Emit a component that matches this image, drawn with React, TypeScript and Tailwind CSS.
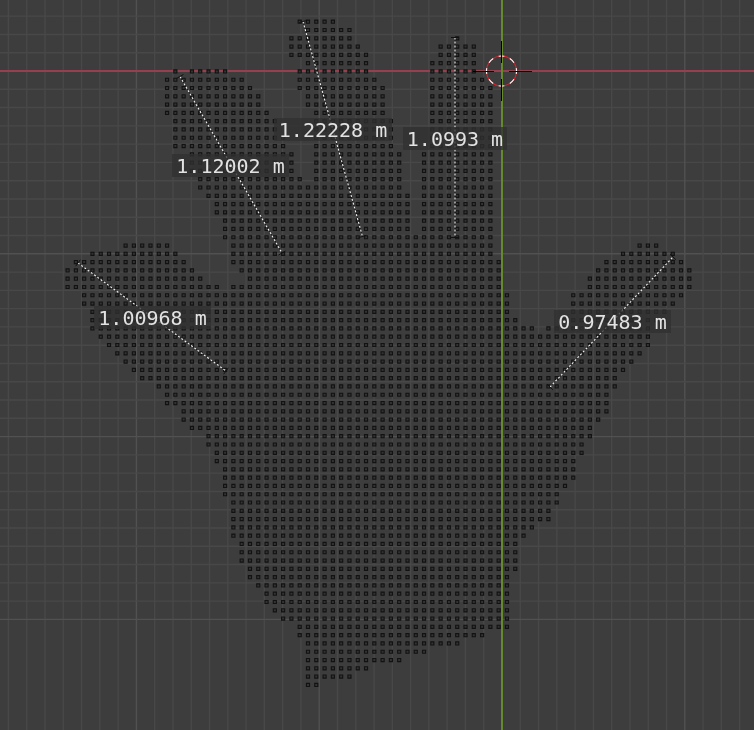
import React from 'react';

type Span = [number, number];

// one entry per row of vertices, top to bottom, as [first column, last column]
const ROWS: Span[][] = [
  [[-1, 3]],
  [[0, 5]],
  [[-2, 5], [18, 18]],
  [[-2, 6], [16, 20]],
  [[-2, 7], [16, 20]],
  [[0, 7], [15, 20]],
  [[-16, -16], [-14, -10], [-1, 7], [15, 20]],
  [[-17, -8], [-1, 8], [15, 21]],
  [[-17, -7], [-1, 9], [15, 22]],
  [[-17, -6], [0, 9], [15, 22]],
  [[-17, -6], [0, 9], [15, 22]],
  [[-17, -5], [1, 9], [15, 22]],
  [[-16, -4], [1, 10], [15, 22]],
  [[-16, -4], [1, 10], [15, 22]],
  [[-16, -3], [1, 10], [15, 22]],
  [[-16, -3], [1, 10], [15, 22]],
  [[-14, -2], [1, 11], [14, 22]],
  [[-14, -2], [1, 11], [14, 22]],
  [[-14, -2], [1, 11], [14, 22]],
  [[-13, -1], [1, 11], [14, 22]],
  [[-13, 11], [14, 22]],
  [[-12, 12], [14, 22]],
  [[-11, 12], [14, 22]],
  [[-11, 12], [14, 22]],
  [[-10, 12], [14, 22]],
  [[-10, 12], [14, 22]],
  [[-10, 22]],
  [[-22, -17], [-9, 22], [40, 42]],
  [[-26, -16], [-9, 22], [38, 44]],
  [[-28, -15], [-9, 23], [36, 45]],
  [[-29, -14], [-8, 23], [35, 46]],
  [[-29, -13], [-7, 23], [34, 46]],
  [[-29, -11], [-9, 23], [34, 46]],
  [[-27, 24], [32, 45]],
  [[-27, 24], [32, 44]],
  [[-26, 24], [32, 43]],
  [[-26, 25], [31, 43]],
  [[-26, 27], [29, 41]],
  [[-25, 41]],
  [[-24, 41]],
  [[-23, 40]],
  [[-22, 39]],
  [[-21, 38]],
  [[-20, 37]],
  [[-18, 37]],
  [[-17, 36]],
  [[-17, 36]],
  [[-15, 36]],
  [[-15, 35]],
  [[-14, 34]],
  [[-12, 34]],
  [[-12, 33]],
  [[-11, 33]],
  [[-11, 32]],
  [[-10, 32]],
  [[-10, 32]],
  [[-10, 31]],
  [[-10, 30]],
  [[-9, 30]],
  [[-9, 29]],
  [[-9, 29]],
  [[-9, 27]],
  [[-9, 26]],
  [[-8, 25]],
  [[-8, 25]],
  [[-8, 25]],
  [[-7, 25]],
  [[-7, 24]],
  [[-6, 24]],
  [[-5, 24]],
  [[-5, 24]],
  [[-4, 24]],
  [[-3, 24]],
  [[-1, 24]],
  [[-1, 21]],
  [[0, 18]],
  [[0, 14]],
  [[0, 11]],
  [[0, 7]],
  [[0, 5]],
  [[0, 1]],
];

const MEASURES = [
  { x1: 180, y1: 76.5, x2: 282, y2: 253 },
  { x1: 303, y1: 21.5, x2: 362.5, y2: 236.5 },
  { x1: 455, y1: 37.5, x2: 455, y2: 237.5 },
  { x1: 78, y1: 263, x2: 226, y2: 371 },
  { x1: 550, y1: 387, x2: 673, y2: 257 },
];

const LABELS = [
  { text: '1.12002 m', className: 'left-[172px] top-[154px] w-[117px] h-[23px]' },
  { text: '1.22228 m', className: 'left-[274px] top-[118px] w-[118px] h-[23px]' },
  { text: '1.0993 m', className: 'left-[403px] top-[127px] w-[104px] h-[23px]' },
  { text: '1.00968 m', className: 'left-[94px] top-[306px] w-[117px] h-[23px]' },
  { text: '0.97483 m', className: 'left-[554px] top-[310px] w-[117px] h-[23px]' },
];

const STEP = 8.29;
const ORIGIN_X = 308;
const ORIGIN_Y = 21.7;
const MINOR = 18.28;
const AXIS_X = 502;
const AXIS_Y = 71;

function buildDots() {
  let outer = '';
  let inner = '';
  ROWS.forEach((spans, row) => {
    const cy = ORIGIN_Y + row * STEP;
    spans.forEach(([from, to]) => {
      for (let col = from; col <= to; col++) {
        const cx = ORIGIN_X + col * STEP;
        outer += `M${(cx - 2.1).toFixed(2)} ${(cy - 2.1).toFixed(2)}h4.2v4.2h-4.2z`;
        inner += `M${(cx - 1).toFixed(2)} ${(cy - 1).toFixed(2)}h2v2h-2z`;
      }
    });
  });
  return { outer, inner };
}

function gridLines() {
  const lines: { pos: number; major: boolean }[] = [];
  for (let k = -30; k <= 30; k++) {
    lines.push({ pos: k * MINOR, major: k % 10 === 0 });
  }
  return lines;
}

const Viewport: React.FC = () => {
  const { outer, inner } = buildDots();
  const grid = gridLines();

  return (
    <svg width={754} height={730} viewBox="0 0 754 730" className="block">
      {grid.map(({ pos, major }) => (
        <React.Fragment key={pos}>
          <line
            x1={0}
            x2={754}
            y1={AXIS_Y + pos}
            y2={AXIS_Y + pos}
            strokeWidth={1.4}
            stroke={major ? '#515151' : '#484848'}
          />
          <line
            y1={0}
            y2={730}
            x1={AXIS_X + pos}
            x2={AXIS_X + pos}
            strokeWidth={1.4}
            stroke={major ? '#515151' : '#484848'}
          />
        </React.Fragment>
      ))}

      <line x1={0} x2={754} y1={71} y2={71} stroke="#96404f" strokeWidth={2} />
      <line y1={0} y2={730} x1={502} x2={502} stroke="#648a2d" strokeWidth={2} />

      <path d={outer} fill="#121212" />
      <path d={inner} fill="#333333" />

      {MEASURES.map((m) => {
        const len = Math.hypot(m.x2 - m.x1, m.y2 - m.y1);
        const nx = (-(m.y2 - m.y1) / len) * 4;
        const ny = ((m.x2 - m.x1) / len) * 4;
        return (
          <g key={m.x1}>
            <line x1={m.x1} y1={m.y1} x2={m.x2} y2={m.y2} stroke="#1a1a1a" />
            <line x1={m.x1} y1={m.y1} x2={m.x2} y2={m.y2} stroke="#f4f4f4" strokeWidth={1.1} strokeDasharray="2 2" />
            <line x1={m.x1 - nx} y1={m.y1 - ny} x2={m.x1 + nx} y2={m.y1 + ny} stroke="#111" />
            <line x1={m.x2 - nx} y1={m.y2 - ny} x2={m.x2 + nx} y2={m.y2 + ny} stroke="#111" />
          </g>
        );
      })}

      {/* 3d cursor */}
      <g>
        <circle cx={501.5} cy={71} r={15} fill="none" stroke="#e0202a" strokeWidth={1.1} />
        <circle
          cx={501.5}
          cy={71}
          r={15}
          fill="none"
          stroke="#ffffff"
          strokeWidth={1.1}
          pathLength={16}
          strokeDasharray="1 1"
          strokeDashoffset={0.5}
        />
        <path
          d="M501.5 41v22M501.5 79v22M473 71h21M509 71h23"
          stroke="#000"
          fill="none"
          shapeRendering="crispEdges"
        />
      </g>
    </svg>
  );
};

export default function App() {
  return (
    <div className="relative w-[754px] h-[730px] overflow-hidden bg-[#3d3d3d]">
      <Viewport />
      {LABELS.map((label) => (
        <div
          key={label.text}
          className={`absolute flex items-center justify-center bg-[#303030c4] text-[20px] leading-none text-[#e2e2e2] font-['DejaVu_Sans_Mono',monospace] ${label.className}`}
        >
          <span className="blur-[0.4px]">{label.text}</span>
        </div>
      ))}
    </div>
  );
}
